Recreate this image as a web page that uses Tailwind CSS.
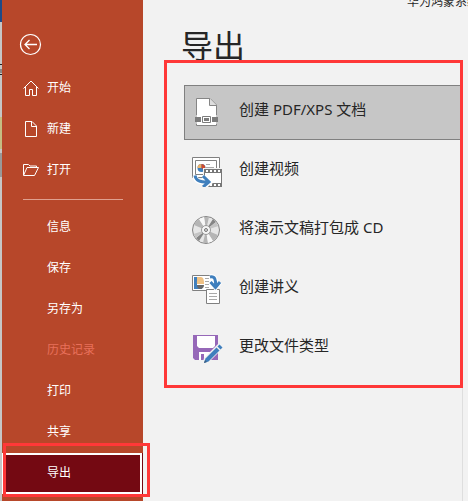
<!DOCTYPE html>
<html lang="zh-CN">
<head>
<meta charset="utf-8">
<meta name="viewport" content="width=device-width, initial-scale=1">
<title>导出</title>
<script src="https://cdn.jsdelivr.net/npm/@tailwindcss/browser@4"></script>
</head>
<body class="flex min-h-screen overflow-hidden bg-[#f2f2f2] font-['Noto_Sans','Noto_Sans_CJK_SC',sans-serif] text-[#262626]">
<!-- Edge of the document window behind -->
<div class="flex w-[2px] shrink-0 flex-col bg-[#c6c6c6]" aria-hidden="true">
  <div class="h-[22px] bg-[#1e4a87]"></div>
  <div class="mt-[42px] h-px bg-[#222]"></div>
  <div class="mt-1 h-1 bg-[#888]"></div>
  <div class="mt-px h-px bg-[#222]"></div>
  <div class="mt-[42px] h-8 bg-[#c5bd82]"></div>
  <div class="mt-1 h-6 bg-[#999]"></div>
</div>

<nav class="w-[141px] shrink-0 bg-[#b7472a] text-[12px] leading-4 text-white">
  <button class="mt-[33px] ml-[17px] block h-[23px] w-[23px]" aria-label="返回">
    <svg class="h-[23px] w-[23px]" viewBox="0 0 23 23" fill="none" stroke="#fff"><circle cx="11.5" cy="11.5" r="10" stroke-width="1.2"/><path d="M18 11.5H6M10.500 7L6 11.500L10.500 16" stroke-width="1.3"/></svg>
  </button>
  <ul class="mt-3">
    <li><a href="#" class="flex h-[41px] items-center gap-2 pb-[2px] pl-[21px]">
      <svg class="h-4 w-4" viewBox="0 0 16 16" fill="none" stroke="#fff"><path d="M.5 8.500L8 1L15.500 8.500M2.500 7V15.500H6.500V9.500H9.500V15.500H13.500V7"/></svg>开始</a></li>
    <li><a href="#" class="flex h-[41px] items-center gap-2 pb-[2px] pl-[21px]">
      <svg class="h-4 w-4" viewBox="0 0 16 16" fill="none" stroke="#fff"><path d="M2.500 .5H9L13.500 5V15.500H2.500ZM8.500 .5V5.500H13.500"/></svg>新建</a></li>
    <li><a href="#" class="flex h-[41px] items-center gap-2 pb-[2px] pl-[21px]">
      <svg class="h-4 w-4" viewBox="0 0 16 16" fill="none" stroke="#fff"><path d="M.5 13V2.500H5.500L7 4H13.500V5.500M.5 13.500L4 5.500H15.500L11.500 13.500Z"/></svg>打开</a></li>
  </ul>
  <hr class="mt-2 mr-5 mb-[7px] ml-[21px] border-t border-[#dfa08f]">
  <ul>
    <li><a href="#" class="flex h-[41px] items-center pb-[2px] pl-[45px]">信息</a></li>
    <li><a href="#" class="flex h-[41px] items-center pb-[2px] pl-[45px]">保存</a></li>
    <li><a href="#" class="flex h-[41px] items-center pb-[2px] pl-[45px]">另存为</a></li>
    <li><a aria-disabled="true" class="flex h-[41px] items-center pb-[2px] pl-[45px] text-[#e8705a]">历史记录</a></li>
    <li><a href="#" class="flex h-[41px] items-center pb-[2px] pl-[45px]">打印</a></li>
    <li><a href="#" class="flex h-[41px] items-center pb-[2px] pl-[45px]">共享</a></li>
    <li class="relative bg-[#740912] pr-px">
      <a href="#" aria-current="page" class="flex h-[41px] items-center border-2 border-white pb-[2px] pl-[43px]">导出</a>
      <span class="pointer-events-none absolute -top-[10px] -right-[7px] -bottom-[3px] left-px border-3 border-[#ff3838]"></span>
    </li>
  </ul>
</nav>

<main class="flex min-w-0 flex-1 flex-col pr-[5px] pl-[21px]">
  <header class="-mr-[5px] flex h-4 justify-end">
    <p class="-mt-[6px] w-[61px] shrink-0 overflow-hidden text-[12px] leading-4 whitespace-nowrap">华为鸿蒙系统</p>
  </header>
  <h1 class="h-11 pl-[17px] text-[32px] leading-[60px]">导出</h1>
  <ul class="flex flex-col gap-1 border-3 border-[#ff3838] pt-[22px] pb-[9px] pl-[17px] text-[15px] leading-6">
    <li><button class="flex h-[55px] w-full gap-4 border border-r-0 border-[#808080] bg-[#c6c6c6] pl-[6px] text-left">
      <svg class="mt-[10px] h-8 w-8 shrink-0" viewBox="0 0 32 32"><path d="M5.500 2.500H19L25.500 9V29.500H5.500Z" fill="#fff" stroke="#858585"/><path d="M18.500 2.500V9.500H25.500" fill="#ddd" stroke="#858585"/><path d="M3 19H28V28H3Z" fill="#c6c6c6"/><path d="M6 19H25V28H6Z" fill="#fff"/><path d="M4 21H10V26H4ZM21 21H27V26H21Z" fill="#7c7c7c"/><path d="M11.500 20.500H19.500V26.500H11.500Z" fill="#fff" stroke="#7c7c7c"/><path d="M13 22H18V25H13Z" fill="#7c7c7c"/></svg>
      <span class="pt-[11px]">创建 PDF/XPS 文档</span></button></li>
    <li><button class="flex h-[55px] w-full gap-4 border border-r-0 border-transparent pl-[6px] text-left">
      <svg class="mt-[10px] h-8 w-8 shrink-0" viewBox="0 0 32 32"><path d="M1.500 2.500H28.500V22.500H1.500Z" fill="#fff" stroke="#808080"/><path d="M4.500 5.500H25.500V19.500H4.500Z" fill="#fff" stroke="#808080"/><circle cx="10.500" cy="13" r="4" fill="#3f7fbd"/><path d="M10.500 13V9A4 4 0 0 0 6.500 13Z" fill="#ecb46a"/><path d="M10.500 13V9A4 4 0 0 1 13.500 15.500Z" fill="#cf4a2c"/><path d="M15 9.500H19M15 12.500H23" stroke="#aaa"/><path d="M12 13H32V32H12Z" fill="#f2f2f2"/><path d="M13 14H31V32H13Z" fill="#777"/><path d="M14 18H30V28H14Z" fill="#fff"/><path d="M15 16H30M15 30H30" stroke="#fff" stroke-width="2" stroke-dasharray="2 2"/><path d="M4 21C5 26 8 27.500 17 27.500M12.500 21.500L18.500 27.500L12.500 32" fill="none" stroke="#fff" stroke-width="5"/><path d="M4 20.500C5 25.500 8 27 17 27M12 21L18 27L12 32" fill="none" stroke="#3f7fbd" stroke-width="3"/></svg>
      <span class="pt-[11px]">创建视频</span></button></li>
    <li><button class="flex h-[55px] w-full gap-4 border border-r-0 border-transparent pl-[6px] text-left">
      <svg class="mt-[10px] h-8 w-8 shrink-0" viewBox="0 0 32 32"><circle cx="15" cy="16" r="13.500" fill="#e6e6e6" stroke="#858585"/><path d="M15 16L3 11A13 13 0 0 1 8 5ZM15 16L13 3H18ZM15 16L27 21A13 13 0 0 1 22 27ZM15 16L12 29H17Z" fill="#b5b5b5"/><path d="M15 16L22 5L25 8ZM15 16L5 24L8 27Z" fill="#858585"/><path d="M15 16L25 8L27.500 12ZM15 16L2.500 20L4.500 24Z" fill="#c4c4c4"/><path d="M15 16L8 5L13 3ZM15 16L22 27L17 29Z" fill="#f8f8f8"/><circle cx="15" cy="16" r="4.500" fill="#f5f5f5" stroke="#999"/><circle cx="15" cy="16" r="1.500" fill="#ddd" stroke="#777"/></svg>
      <span class="pt-[11px]">将演示文稿打包成 CD</span></button></li>
    <li><button class="flex h-[55px] w-full gap-4 border border-r-0 border-transparent pl-[6px] text-left">
      <svg class="mt-[10px] h-8 w-8 shrink-0" viewBox="0 0 32 32"><path d="M1.500 2.500H22.500V17.500H1.500Z" fill="#fff" stroke="#808080"/><path d="M3 4H6V12L11 15V16H3Z" fill="#3f7fbd"/><path d="M9 11V4.500A6 6 0 0 0 6 11Z" fill="#ecb46a"/><path d="M6 4H10C12 4 13 6 13 10V11H6Z" fill="#efc184"/><path d="M6 12H13C13 14 12 16 9 16C7 16 6 14 6 12Z" fill="#686868"/><path d="M14 5.500H18M14 8.500H18M14 11.500H18M14 14.500H18" stroke="#aaa"/><path d="M15.500 16.500H28.500V30.500H15.500Z" fill="#fff" stroke="#808080"/><path d="M18 20.500H26M18 23.500H26M18 26.500H26" stroke="#aaa"/><path d="M19 4C24 3 25 7 24.500 13M19.500 9L24.500 14.500L29 9" fill="none" stroke="#fff" stroke-width="5"/><path d="M19 4C24 3 25 7 24.500 13M19.500 9L24.500 14.500L29 9" fill="none" stroke="#3f7fbd" stroke-width="3"/></svg>
      <span class="pt-[11px]">创建讲义</span></button></li>
    <li><button class="flex h-[55px] w-full gap-4 border border-r-0 border-transparent pl-[6px] text-left">
      <svg class="mt-[10px] h-8 w-8 shrink-0" viewBox="0 0 32 32"><path d="M2 3H27V28H4L2 26Z" fill="#9668b8"/><path d="M6 4H24V14L22 16H8L6 14Z" fill="#fff"/><path d="M8 20H20V28H8Z" fill="#fff"/><path d="M10 22H13V28H10Z" fill="#9668b8"/><path d="M11.500 32L13 26L27 12L32 16L18 30Z" fill="#f2f2f2"/><path d="M13 31L14.500 26.500L25.500 15.500L28.500 18.500L17.500 29.500Z" fill="#3f7fbd"/><path d="M26.500 14.500L28.500 12.500L31.500 15.500L29.500 17.500Z" fill="#3f7fbd"/><path d="M13 31L14 28L16 30Z" fill="#3d5f80"/></svg>
      <span class="pt-[11px]">更改文件类型</span></button></li>
  </ul>
  <div class="flex-1 border-r border-[#dedede]"></div>
</main>
</body>
</html>
